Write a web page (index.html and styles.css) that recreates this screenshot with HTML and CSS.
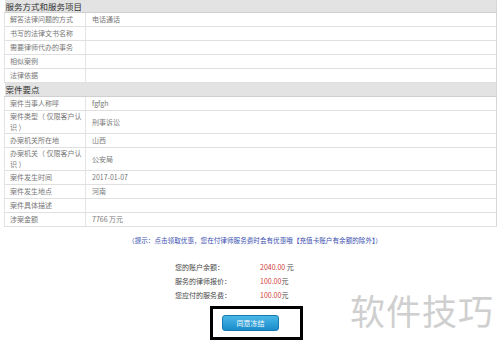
FILE: index.html
```html
<!DOCTYPE html>
<html lang="zh-CN">
<head>
  <meta charset="UTF-8" />
  <title>订单确认</title>
  <link rel="stylesheet" href="styles.css">
</head>
<body>
  <div class="pagina">
    <table class="info">
      <colgroup><col class="col-rotulo"><col></colgroup>
      <tr class="secao"><td colspan="2">服务方式和服务项目</td></tr>
      <tr><td class="rotulo">解答法律问题的方式</td><td>电话通话</td></tr>
      <tr><td class="rotulo">书写的法律文书名称</td><td></td></tr>
      <tr><td class="rotulo">需要律师代办的事务</td><td></td></tr>
      <tr><td class="rotulo">相似案例</td><td></td></tr>
      <tr><td class="rotulo">法律依据</td><td></td></tr>
      <tr class="secao segunda"><td colspan="2">案件要点</td></tr>
      <tr><td class="rotulo">案件当事人称呼</td><td>fgfgh</td></tr>
      <tr class="dupla"><td class="rotulo">案件类型（ 仅限客户认<br>识 ）</td><td>刑事诉讼</td></tr>
      <tr><td class="rotulo">办案机关所在地</td><td>山西</td></tr>
      <tr class="dupla"><td class="rotulo">办案机关（ 仅限客户认<br>识 ）</td><td>公安局</td></tr>
      <tr><td class="rotulo">案件发生时间</td><td>2017-01-07</td></tr>
      <tr><td class="rotulo">案件发生地点</td><td>河南</td></tr>
      <tr><td class="rotulo">案件具体描述</td><td></td></tr>
      <tr><td class="rotulo">涉案金额</td><td>7766 万元</td></tr>
    </table>

    <p class="aviso">（提示：点击领取优惠，您在付律师服务费时会有优惠哦【充值卡账户有余额的除外】）</p>

    <div class="resumo">
      <div class="linha"><span class="nome">您的账户余额：</span><span class="valor"><em>2040.00</em> 元</span></div>
      <div class="linha"><span class="nome">服务的律师报价：</span><span class="valor"><em>100.00</em>元</span></div>
      <div class="linha"><span class="nome">您应付的服务费：</span><span class="valor"><em>100.00</em>元</span></div>
    </div>

    <div class="acao">
      <div class="moldura">
        <button class="confirmar">同意冻结</button>
      </div>
    </div>

    <div class="marca">软件技巧</div>
  </div>
</body>
</html>
```

FILE: styles.css
```css
body {
  margin: 0;
  background: #fff;
  font-family: "Noto Sans CJK SC", "Noto Sans", sans-serif;
  color: #666;
}
.pagina {
  position: relative;
  width: 500px;
  height: 345px;
  overflow: hidden;
}
.info {
  margin-left: 4px;
  width: 493px;
  border-collapse: collapse;
  table-layout: fixed;
  border-right: 1px solid #d6d6d6;
  font-size: 7px;
}
.col-rotulo {
  width: 81px;
}
.info td {
  height: 13px;
  padding: 0 6px;
  border-bottom: 1px solid #e0e0e0;
  line-height: 9px;
  color: #777;
  white-space: nowrap;
}
.info td.rotulo {
  padding-left: 5px;
  border-right: 1px solid #e4e4e4;
  border-left: 1px solid #e4e4e4;
}
.info tr.dupla td {
  height: 22px;
  line-height: 11px;
}
.info tr.secao td {
  height: 12px;
  background: #e3e3e3;
  color: #333;
  font-size: 8.5px;
  padding-left: 1px;
  border-bottom: 1px solid #d0d0d0;
}
.info tr.segunda td {
  height: 13px;
}
.aviso {
  margin: 8px 0 0;
  text-align: center;
  font-size: 6.6px;
  color: #3a4fb0;
  padding-left: 10px;
}
.resumo {
  margin: 15px 0 0 175px;
  font-size: 7px;
  color: #444;
}
.linha {
  display: flex;
  height: 14px;
  align-items: center;
}
.nome {
  width: 85px;
}
.valor em {
  font-style: normal;
  color: #d04040;
}
.acao {
  display: flex;
  margin: 4px 0 0 210px;
}
.moldura {
  width: 78px;
  height: 28px;
  border: 3px solid #000;
  display: flex;
  align-items: center;
  padding-left: 9px;
}
.confirmar {
  width: 57px;
  height: 16px;
  padding: 0;
  border: 1px solid #1779b0;
  border-radius: 3px;
  background: linear-gradient(#4ab8e6, #1a8ccb);
  color: #fff;
  font-family: inherit;
  font-size: 7px;
}
.marca {
  position: absolute;
  left: 350px;
  top: 284px;
  font-size: 35px;
  letter-spacing: 1px;
  color: #cfcfcf;
}
```
